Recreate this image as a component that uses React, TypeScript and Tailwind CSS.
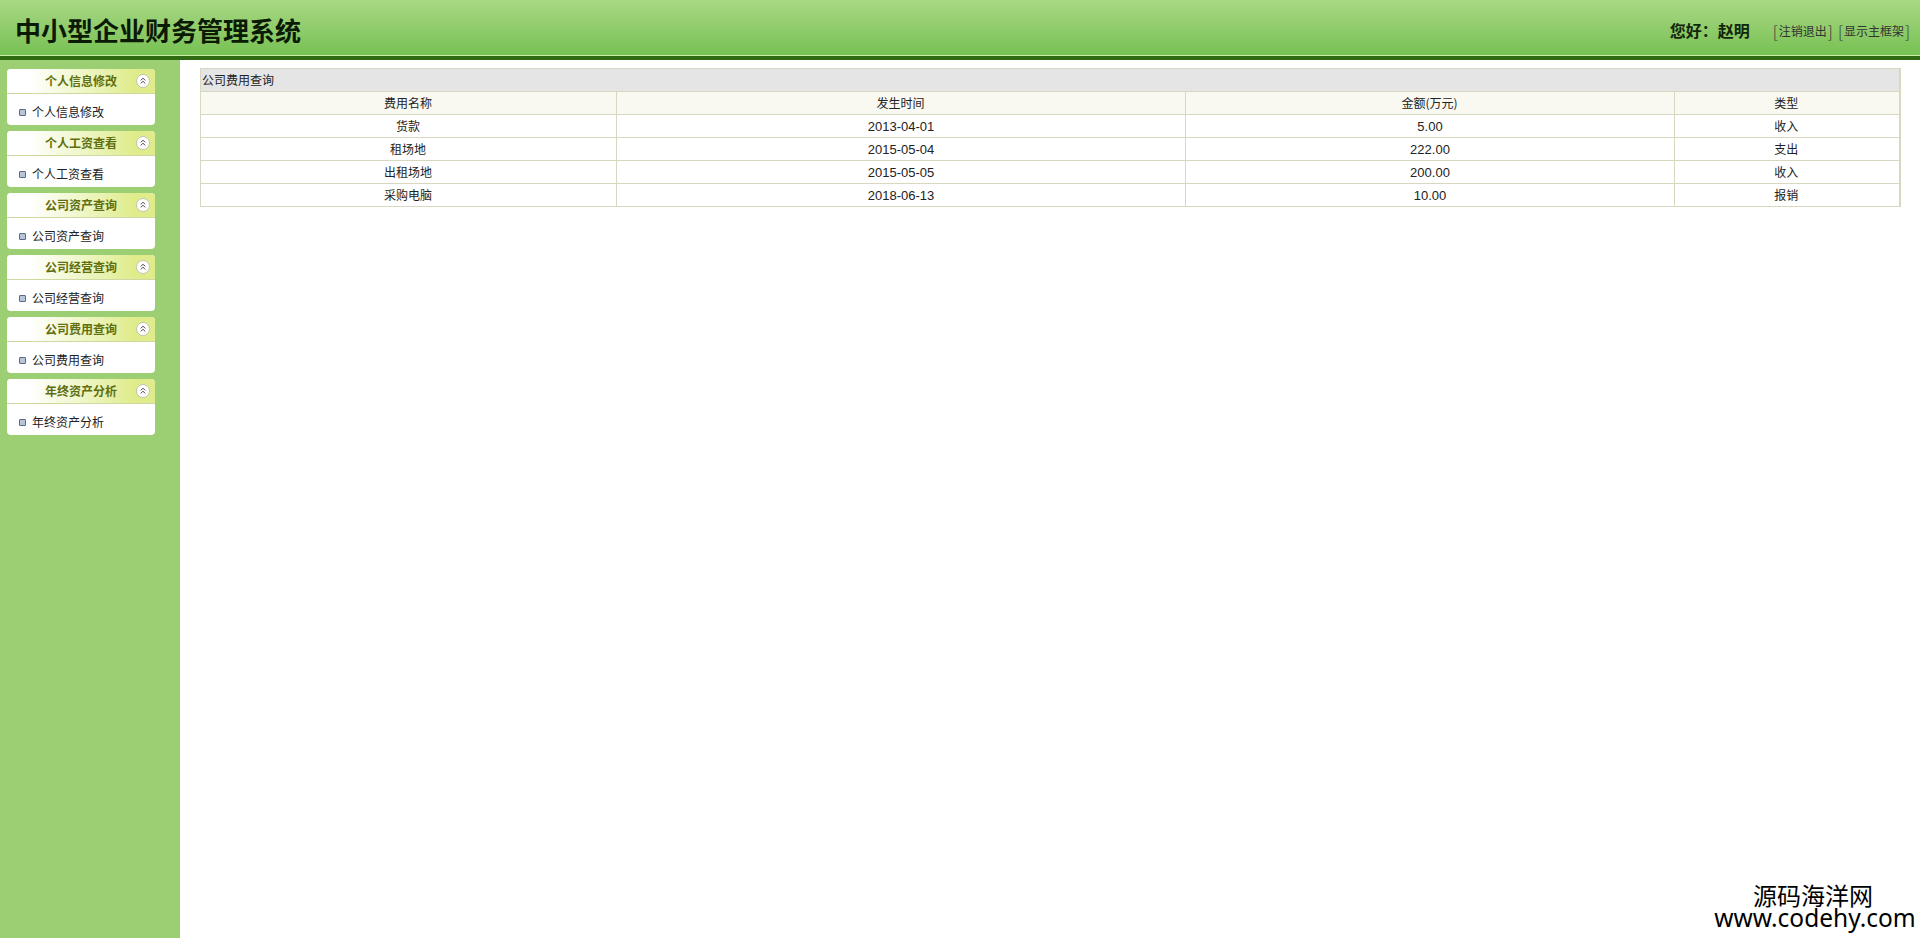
import React from "react";

const FONT = "font-['SimSun','Noto_Sans_CJK_SC','Liberation_Sans',sans-serif]";

const menus = [
  "个人信息修改",
  "个人工资查看",
  "公司资产查询",
  "公司经营查询",
  "公司费用查询",
  "年终资产分析",
];

const rows = [
  ["货款", "2013-04-01", "5.00", "收入"],
  ["租场地", "2015-05-04", "222.00", "支出"],
  ["出租场地", "2015-05-05", "200.00", "收入"],
  ["采购电脑", "2018-06-13", "10.00", "报销"],
];

const Panel = ({ title }: { title: string }) => (
  <div className="w-[148px] h-[56px] rounded-[4px] overflow-hidden bg-white">
    <div className="h-[25px] flex items-center border-b border-[#cfd8a0] bg-linear-to-r from-[#ffffff] from-[15%] to-[#e0ec8c] to-[85%] relative">
      <span className="ml-[38px] text-[12px] font-bold text-[#5f6f10] leading-[24px]">{title}</span>
      <svg className="absolute right-[5px] top-[5px] w-[14px] h-[14px]" viewBox="0 0 14 14" fill="none">
        <circle cx="7" cy="7" r="6.5" fill="#fff" stroke="#c4c4b0" />
        <path d="M4.8 6.4 7 4.2l2.2 2.2M4.8 9.4 7 7.2l2.2 2.2" stroke="#444" strokeWidth="1" />
      </svg>
    </div>
    <div className="h-[31px] flex items-center pl-[12px] pt-[5px]">
      <span className="w-[7px] h-[7px] border border-[#5a6a8a] bg-[#b8c4d8] rounded-[1px] mr-[6px]" />
      <span className="text-[12px] text-[#222] leading-none">{title}</span>
    </div>
  </div>
);

const App = () => {
  return (
    <div className={`${FONT} w-[1920px] h-[938px] bg-white flex flex-col overflow-hidden relative`}>
      {/* top bar */}
      <div className="h-[60px] shrink-0 flex items-start justify-between bg-linear-to-b from-[#a9d884] to-[#76c052] border-b-[4px] border-[#2f6a12] shadow-[inset_0_-1px_0_#c6eea4]">
        <h1 className="ml-[15px] mt-[12px] text-[26px] leading-[36px] font-bold text-[#0a1a05]">
          中小型企业财务管理系统
        </h1>
        <div className="flex items-center h-[16px] mt-[23px] mr-[10px] text-[#333] text-[12px]">
          <span className="text-[16px] font-bold text-[#12260a] mr-[23px] -mt-[2px]">您好：赵明</span>
          <span className="text-[16px] font-light mr-[1px]">[</span>
          <span>注销退出</span>
          <span className="text-[16px] font-light ml-[1px] mr-[5px]">]</span>
          <span className="text-[16px] font-light mr-[1px]">[</span>
          <span>显示主框架</span>
          <span className="text-[16px] font-light ml-[1px]">]</span>
        </div>
      </div>

      <div className="flex-1 flex min-h-0">
        {/* left menu */}
        <div className="w-[180px] shrink-0 bg-[#9ccf74] pt-[9px] pl-[7px] flex flex-col gap-[6px]">
          {menus.map((m) => (
            <Panel key={m} title={m} />
          ))}
        </div>

        {/* content */}
        <div className="flex-1 pt-[8px] pl-[20px] pr-[19px]">
          <table className="w-[1699px] table-fixed border-collapse text-[12px] text-[#222] border border-[#d8d8c0] border-r-2">
            <colgroup>
              <col className="w-[416px]" />
              <col className="w-[569px]" />
              <col className="w-[489px]" />
              <col className="w-[225px]" />
            </colgroup>
            <thead>
              <tr className="h-[23px] bg-[#e5e5e5]">
                <th colSpan={4} className="text-left font-normal pl-[1px] border-b border-[#d8d8c0] text-[#222]">
                  公司费用查询
                </th>
              </tr>
              <tr className="h-[23px] bg-[#f9f9f1]">
                {["费用名称", "发生时间", "金额(万元)", "类型"].map((h) => (
                  <th key={h} className="font-normal border border-[#d8d8c0] pr-[1px]">
                    {h}
                  </th>
                ))}
              </tr>
            </thead>
            <tbody>
              {rows.map((r) => (
                <tr key={r[1]} className="h-[23px]">
                  <td className="text-center border border-[#d8d8c0] pr-[1px]">{r[0]}</td>
                  <td className="text-center border border-[#d8d8c0] pt-[1px] font-['Liberation_Sans',sans-serif] text-[13px]">{r[1]}</td>
                  <td className="text-center border border-[#d8d8c0] pt-[1px] font-['Liberation_Sans',sans-serif] text-[13px]">{r[2]}</td>
                  <td className="text-center border border-[#d8d8c0] pr-[1px]">{r[3]}</td>
                </tr>
              ))}
            </tbody>
          </table>
        </div>
      </div>

      {/* site watermark */}
      <div className="absolute right-[2px] bottom-[10px] w-[206px] text-center text-black font-['Noto_Sans_CJK_SC','Noto_Sans',sans-serif]">
        <div className="text-[24px] leading-[26px] pr-[4px]">源码海洋网</div>
        <div className="text-[24.5px] leading-[20px] whitespace-nowrap font-['Noto_Sans',sans-serif]">www.codehy.com</div>
      </div>
    </div>
  );
};

export default App;
